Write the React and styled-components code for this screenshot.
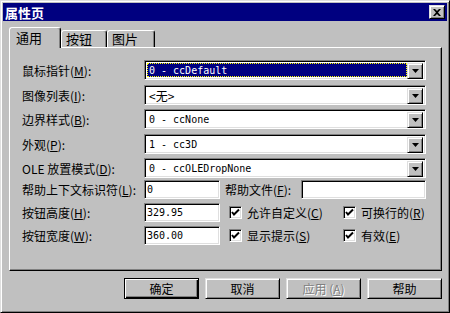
import React from "react";
import styled, { createGlobalStyle, css } from "styled-components";

const GlobalStyle = createGlobalStyle`
  * { box-sizing: border-box; }
  body {
    margin: 0;
    background: #c0c0c0;
    font-family: "Noto Sans CJK SC", sans-serif;
    font-size: 12px;
    color: #000;
  }
`;

const raised = css`
  border: 1px solid;
  border-color: #dfdfdf #000 #000 #dfdfdf;
  box-shadow: inset 1px 1px #fff, inset -1px -1px #808080;
`;

const sunken = css`
  border: 1px solid;
  border-color: #808080 #fff #fff #808080;
  box-shadow: inset 1px 1px #000, inset -1px -1px #dfdfdf;
  background: #fff;
`;

const Window = styled.div`
  ${raised}
  width: 450px;
  height: 313px;
  background: #c0c0c0;
  padding: 2px;
  display: flex;
  flex-direction: column;
`;

const TitleBar = styled.div`
  height: 18px;
  background: #000080;
  display: flex;
  align-items: center;
  justify-content: space-between;
  padding: 0 2px;
`;

const Title = styled.span`
  color: #fff;
  font-weight: bold;
  font-size: 13px;
`;

const CloseButton = styled.div`
  ${raised}
  width: 16px;
  height: 14px;
  background: #c0c0c0;
  display: flex;
  align-items: center;
  justify-content: center;
`;

const Body = styled.div`
  padding: 6px 5px 0 6px;
  display: flex;
  flex-direction: column;
`;

const TabStrip = styled.div`
  height: 20px;
  display: flex;
  align-items: flex-end;
`;

const Tab = styled.div`
  position: relative;
  height: ${(p) => (p.$active ? 21 : 17)}px;
  width: ${(p) => p.$w}px;
  margin-bottom: ${(p) => (p.$active ? -1 : 0)}px;
  z-index: ${(p) => (p.$active ? 2 : 1)};
  background: #c0c0c0;
  border-top: 1px solid #fff;
  border-left: 1px solid #fff;
  border-right: 1px solid #000;
  box-shadow: inset -1px 0 #808080;
  border-radius: 3px 3px 0 0;
  padding-left: ${(p) => (p.$active ? 6 : 4)}px;
  font-size: 13px;
  line-height: ${(p) => (p.$active ? 19 : 15)}px;
`;

const Panel = styled.div`
  height: 224px;
  border: 1px solid;
  border-color: #fff #000 #000 #fff;
  box-shadow: inset -1px -1px #808080;
  padding: 12px 15px 0 12px;
  display: flex;
  flex-direction: column;
`;

const Row = styled.div`
  display: flex;
  align-items: center;
  height: ${(p) => p.$h}px;
  margin-top: ${(p) => p.$mt}px;
`;

const Label = styled.div`
  width: 122px;
  flex-shrink: 0;
  white-space: nowrap;
  font-size: 12px;
`;

const SubLabel = styled(Label)`
  width: 76px;
  margin-left: 5px;
`;

const Combo = styled.div`
  ${sunken}
  flex: 1;
  height: 20px;
  padding: 2px;
  display: flex;
`;

const Value = styled.div`
  flex: 1;
  padding-left: 2px;
  font-family: "DejaVu Sans Mono", "Noto Sans CJK SC", monospace;
  font-size: 10px;
  line-height: 16px;
  white-space: nowrap;
  ${(p) =>
    p.$selected &&
    css`
      background: #000080;
      color: #fff;
      outline: 1px dotted #ffff00;
      outline-offset: -1px;
    `}
`;

const Cjk = styled.span`
  font-family: "Noto Sans CJK SC", sans-serif;
  font-size: 12px;
`;

const DropButton = styled.div`
  ${raised}
  width: 16px;
  height: 16px;
  background: #c0c0c0;
  display: flex;
  align-items: center;
  justify-content: center;
`;

const Edit = styled.div`
  ${sunken}
  width: ${(p) => (p.$w ? `${p.$w}px` : "auto")};
  flex: ${(p) => (p.$w ? "0 0 auto" : "1")};
  height: 19px;
  padding: 0 2px;
  font-family: "DejaVu Sans Mono", monospace;
  font-size: 10px;
  line-height: 17px;
`;

const CheckItem = styled.div`
  display: flex;
  align-items: center;
  gap: 5px;
  width: ${(p) => (p.$w ? `${p.$w}px` : "auto")};
  margin-left: ${(p) => p.$ml || 0}px;
  white-space: nowrap;
`;

const CheckBox = styled.div`
  ${sunken}
  width: 13px;
  height: 13px;
  display: flex;
  align-items: center;
  justify-content: center;
`;

const ButtonRow = styled.div`
  display: flex;
  justify-content: flex-end;
  gap: 6px;
  margin-top: 7px;
`;

const Button = styled.div`
  ${raised}
  width: 75px;
  height: 21px;
  background: #c0c0c0;
  display: flex;
  align-items: center;
  justify-content: center;
  font-size: 12px;
  ${(p) =>
    p.$default &&
    css`
      border-color: #000;
      box-shadow: inset 1px 1px #fff, inset -1px -1px #000,
        inset -2px -2px #808080;
    `}
  ${(p) =>
    p.$disabled &&
    css`
      color: #808080;
      text-shadow: 1px 1px #fff;
    `}
`;

const Arrow = () => (
  <svg width="7" height="4" viewBox="0 0 7 4">
    <polygon points="0,0 7,0 3.5,4" fill="#000" />
  </svg>
);

const Check = () => (
  <svg width="9" height="9" viewBox="0 0 9 9">
    <polyline points="1,4 3,6.5 8,1.5" fill="none" stroke="#000" strokeWidth="2" />
  </svg>
);

const Key = ({ k }) => (
  <>
    (<u>{k}</u>)
  </>
);

const ComboRow = ({ label, k, mt, children, selected }) => (
  <Row $h={20} $mt={mt}>
    <Label>
      {label}
      <Key k={k} />:
    </Label>
    <Combo>
      <Value $selected={selected}>{children}</Value>
      <DropButton>
        <Arrow />
      </DropButton>
    </Combo>
  </Row>
);

const Checked = ({ label, k, w, ml }) => (
  <CheckItem $w={w} $ml={ml}>
    <CheckBox>
      <Check />
    </CheckBox>
    <span>
      {label}
      <Key k={k} />
    </span>
  </CheckItem>
);

const App = () => {
  return (
    <>
      <GlobalStyle />
      <Window>
        <TitleBar>
          <Title>属性页</Title>
          <CloseButton>
            <svg width="8" height="7" viewBox="0 0 8 7">
              <path d="M0 0h2l2 2 2-2h2L5 3.5 8 7H6L4 5 2 7H0l3-3.5z" fill="#000" />
            </svg>
          </CloseButton>
        </TitleBar>
        <Body>
          <TabStrip>
            <Tab $active $w={52}>通用</Tab>
            <Tab $w={46}>按钮</Tab>
            <Tab $w={48}>图片</Tab>
          </TabStrip>
          <Panel>
            <ComboRow label="鼠标指针" k="M" mt={0} selected>
              0 - ccDefault
            </ComboRow>
            <ComboRow label="图像列表" k="I" mt={5}>
              <Cjk>&lt;无&gt;</Cjk>
            </ComboRow>
            <ComboRow label="边界样式" k="B" mt={4}>
              0 - ccNone
            </ComboRow>
            <ComboRow label="外观" k="P" mt={5}>
              1 - cc3D
            </ComboRow>
            <ComboRow label="OLE 放置模式" k="D" mt={4}>
              0 - ccOLEDropNone
            </ComboRow>
            <Row $h={19} $mt={2}>
              <Label>
                帮助上下文标识符<Key k="L" />:
              </Label>
              <Edit $w={76}>0</Edit>
              <SubLabel>
                帮助文件<Key k="F" />:
              </SubLabel>
              <Edit />
            </Row>
            <Row $h={19} $mt={4}>
              <Label>
                按钮高度<Key k="H" />:
              </Label>
              <Edit $w={76}>329.95</Edit>
              <Checked label="允许自定义" k="C" w={114} ml={9} />
              <Checked label="可换行的" k="R" />
            </Row>
            <Row $h={19} $mt={4}>
              <Label>
                按钮宽度<Key k="W" />:
              </Label>
              <Edit $w={76}>360.00</Edit>
              <Checked label="显示提示" k="S" w={114} ml={9} />
              <Checked label="有效" k="E" />
            </Row>
          </Panel>
          <ButtonRow>
            <Button $default>确定</Button>
            <Button>取消</Button>
            <Button $disabled>
              应用 (<u>A</u>)
            </Button>
            <Button>帮助</Button>
          </ButtonRow>
        </Body>
      </Window>
    </>
  );
};

export default App;
